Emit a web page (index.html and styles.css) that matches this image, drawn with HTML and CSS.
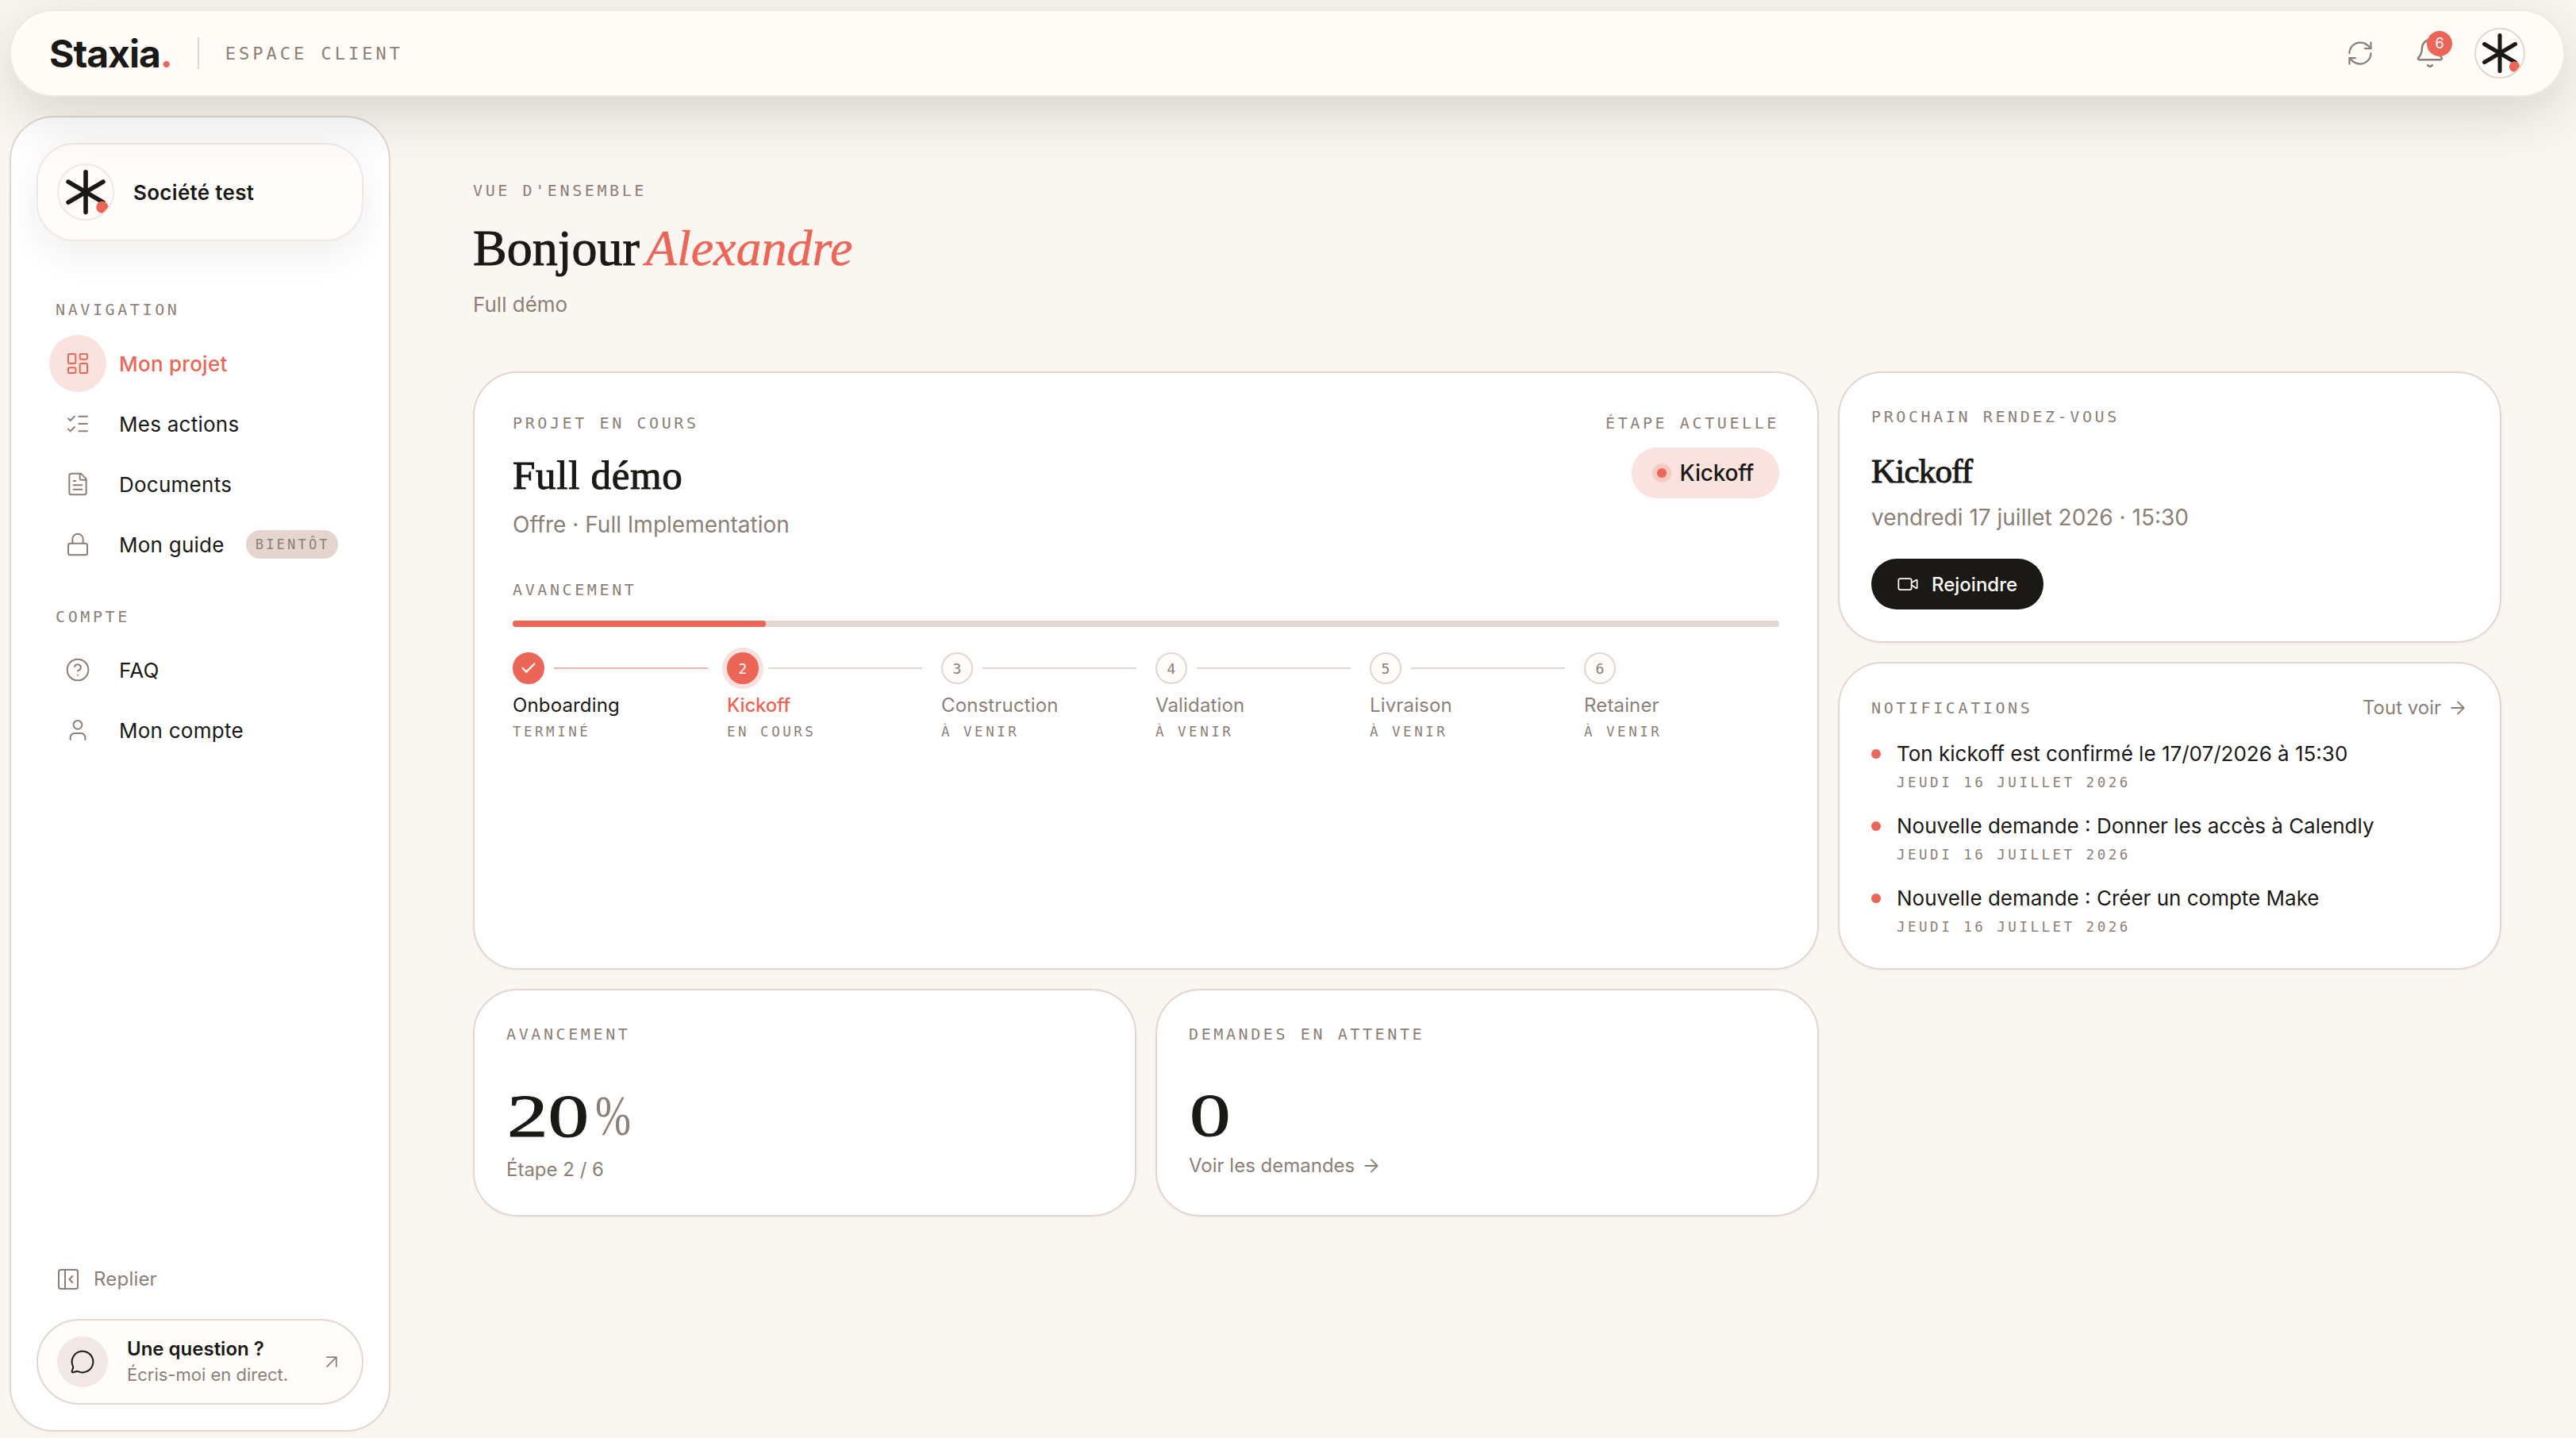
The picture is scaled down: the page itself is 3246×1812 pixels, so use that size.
FILE: index.html
```html
<!DOCTYPE html>
<html lang="fr">
<head>
    <meta charset="UTF-8">
    <title>Staxia - Espace client</title>
    <link rel="stylesheet" href="styles.css">
</head>
<body>
    <header class="topbar">
        <div class="logo">Staxia<span class="logo-dot">.</span></div>
        <div class="divider"></div>
        <div class="space-name">Espace client</div>
        <div class="topbar-actions">
            <svg class="icon icon-refresh" viewBox="0 0 24 24"><path d="M3 12a9 9 0 0 1 9-9 9.75 9.75 0 0 1 6.74 2.74L21 8"/><path d="M21 3v5h-5"/><path d="M21 12a9 9 0 0 1-9 9 9.75 9.75 0 0 1-6.74-2.74L3 16"/><path d="M8 16H3v5"/></svg>
            <div class="bell">
                <svg class="icon icon-bell" viewBox="0 0 24 24"><path d="M10.268 21a2 2 0 0 0 3.464 0"/><path d="M3.262 15.326A1 1 0 0 0 4 17h16a1 1 0 0 0 .74-1.673C19.41 13.956 18 12.499 18 8A6 6 0 0 0 6 8c0 4.499-1.411 5.956-2.738 7.326"/></svg>
                <span class="bell-count">6</span>
            </div>
            <div class="avatar">
                <svg viewBox="0 0 64 64"><g stroke="#1a1915" stroke-width="5" stroke-linecap="round"><path d="M32 9.500v45M12.500 20.500l39 23M51.500 20.500l-39 23"/></g><circle cx="50.500" cy="49" r="6.700" fill="#ec6657"/></svg>
            </div>
        </div>
    </header>

    <div class="layout">
        <aside class="sidebar">
            <div class="company">
                <div class="avatar avatar-company">
                    <svg viewBox="0 0 64 64"><g stroke="#1a1915" stroke-width="5" stroke-linecap="round"><path d="M32 9.500v45M12.500 20.500l39 23M51.500 20.500l-39 23"/></g><circle cx="50.500" cy="49" r="6.700" fill="#ec6657"/></svg>
                </div>
                <span class="company-name">Société test</span>
            </div>

            <div class="label nav-label">Navigation</div>
            <nav class="nav">
                <a class="nav-item active">
                    <span class="nav-icon"><svg class="icon" viewBox="0 0 24 24"><rect x="3" y="3" width="7" height="9" rx="1"/><rect x="14" y="3" width="7" height="5" rx="1"/><rect x="14" y="12" width="7" height="9" rx="1"/><rect x="3" y="16" width="7" height="5" rx="1"/></svg></span>
                    <span>Mon projet</span>
                </a>
                <a class="nav-item">
                    <span class="nav-icon"><svg class="icon" viewBox="0 0 24 24"><path d="M13 5h8M13 12h8M13 19h8M3 17l2 2 4-4M3 7l2 2 4-4"/></svg></span>
                    <span>Mes actions</span>
                </a>
                <a class="nav-item">
                    <span class="nav-icon"><svg class="icon" viewBox="0 0 24 24"><path d="M6 22a2 2 0 0 1-2-2V4a2 2 0 0 1 2-2h8a2.400 2.400 0 0 1 1.704.706l3.588 3.588A2.400 2.400 0 0 1 20 8v12a2 2 0 0 1-2 2z"/><path d="M14 2v5a1 1 0 0 0 1 1h5M10 9H8M16 13H8M16 17H8"/></svg></span>
                    <span>Documents</span>
                </a>
                <a class="nav-item">
                    <span class="nav-icon"><svg class="icon" viewBox="0 0 24 24"><rect x="3" y="11" width="18" height="11" rx="2"/><path d="M7 11V7a5 5 0 0 1 10 0v4"/></svg></span>
                    <span>Mon guide</span>
                    <span class="soon">Bientôt</span>
                </a>
            </nav>

            <div class="label nav-label nav-label-account">Compte</div>
            <nav class="nav">
                <a class="nav-item">
                    <span class="nav-icon"><svg class="icon" viewBox="0 0 24 24"><circle cx="12" cy="12" r="10"/><path d="M9.090 9a3 3 0 0 1 5.830 1c0 2-3 3-3 3M12 17h.01"/></svg></span>
                    <span>FAQ</span>
                </a>
                <a class="nav-item">
                    <span class="nav-icon"><svg class="icon" viewBox="0 0 24 24"><path d="M19 21v-2a4 4 0 0 0-4-4H9a4 4 0 0 0-4 4v2"/><circle cx="12" cy="7" r="4"/></svg></span>
                    <span>Mon compte</span>
                </a>
            </nav>

            <div class="collapse">
                <svg class="icon" viewBox="0 0 24 24"><rect x="3" y="3" width="18" height="18" rx="2"/><path d="M9 3v18M16 15l-3-3 3-3"/></svg>
                <span>Replier</span>
            </div>
            <a class="question">
                <span class="question-icon"><svg class="icon" viewBox="0 0 24 24"><path d="M2.992 16.342a2 2 0 0 1 .094 1.167l-1.065 3.290a1 1 0 0 0 1.236 1.168l3.413-.998a2 2 0 0 1 1.099.092 10 10 0 1 0-4.777-4.719"/></svg></span>
                <span class="question-text">
                    <span class="question-title">Une question ?</span>
                    <span class="question-sub">Écris-moi en direct.</span>
                </span>
                <svg class="icon icon-small" viewBox="0 0 24 24"><path d="M7 7h10v10M7 17 17 7"/></svg>
            </a>
        </aside>

        <main class="main">
            <div class="label">Vue d'ensemble</div>
            <h1>Bonjour <em>Alexandre</em></h1>
            <p class="subtitle">Full démo</p>

            <div class="grid">
                <section class="card card-project">
                    <div class="project-head">
                        <div>
                            <div class="label">Projet en cours</div>
                            <h2>Full démo</h2>
                            <p class="offer">Offre · Full Implementation</p>
                        </div>
                        <div class="current">
                            <div class="label">Étape actuelle</div>
                            <div class="pill"><span class="pill-dot"></span>Kickoff</div>
                        </div>
                    </div>
                    <div class="label progress-label">Avancement</div>
                    <div class="progress"><div class="progress-fill" style="width: 20%"></div></div>
                    <div class="steps">
                        <div class="step done">
                            <div class="step-top"><span class="step-num"><svg class="check" viewBox="0 0 24 24"><path d="M20 6 9 17l-5-5"/></svg></span><span class="step-line"></span></div>
                            <div class="step-name">Onboarding</div>
                            <div class="step-state">Terminé</div>
                        </div>
                        <div class="step now">
                            <div class="step-top"><span class="step-num">2</span><span class="step-line"></span></div>
                            <div class="step-name">Kickoff</div>
                            <div class="step-state">En cours</div>
                        </div>
                        <div class="step">
                            <div class="step-top"><span class="step-num">3</span><span class="step-line"></span></div>
                            <div class="step-name">Construction</div>
                            <div class="step-state">À venir</div>
                        </div>
                        <div class="step">
                            <div class="step-top"><span class="step-num">4</span><span class="step-line"></span></div>
                            <div class="step-name">Validation</div>
                            <div class="step-state">À venir</div>
                        </div>
                        <div class="step">
                            <div class="step-top"><span class="step-num">5</span><span class="step-line"></span></div>
                            <div class="step-name">Livraison</div>
                            <div class="step-state">À venir</div>
                        </div>
                        <div class="step">
                            <div class="step-top"><span class="step-num">6</span></div>
                            <div class="step-name">Retainer</div>
                            <div class="step-state">À venir</div>
                        </div>
                    </div>
                </section>

                <section class="card">
                    <div class="label">Prochain rendez-vous</div>
                    <h3>Kickoff</h3>
                    <p class="meeting-date">vendredi 17 juillet 2026 · 15:30</p>
                    <a class="join">
                        <svg class="icon icon-small" viewBox="0 0 24 24"><path d="m16 13 5.223 3.482a.5.5 0 0 0 .777-.416V7.870a.5.5 0 0 0-.752-.432L16 10.500"/><rect x="2" y="6" width="14" height="12" rx="2"/></svg>
                        <span>Rejoindre</span>
                    </a>
                </section>

                <section class="card">
                    <div class="notif-head">
                        <div class="label">Notifications</div>
                        <a class="link">Tout voir <svg class="icon" viewBox="0 0 24 24"><path d="M5 12h14M12 5l7 7-7 7"/></svg></a>
                    </div>
                    <ul class="notifs">
                        <li>
                            <div class="notif-text">Ton kickoff est confirmé le 17/07/2026 à 15:30</div>
                            <div class="step-state">Jeudi 16 juillet 2026</div>
                        </li>
                        <li>
                            <div class="notif-text">Nouvelle demande : Donner les accès à Calendly</div>
                            <div class="step-state">Jeudi 16 juillet 2026</div>
                        </li>
                        <li>
                            <div class="notif-text">Nouvelle demande : Créer un compte Make</div>
                            <div class="step-state">Jeudi 16 juillet 2026</div>
                        </li>
                    </ul>
                </section>

                <section class="card">
                    <div class="label">Avancement</div>
                    <div class="stat"><span class="stat-num">20</span><span class="stat-unit">%</span></div>
                    <div class="stat-sub">Étape 2 / 6</div>
                </section>

                <section class="card">
                    <div class="label">Demandes en attente</div>
                    <div class="stat stat-requests"><span class="stat-num">0</span></div>
                    <a class="link">Voir les demandes <svg class="icon" viewBox="0 0 24 24"><path d="M5 12h14M12 5l7 7-7 7"/></svg></a>
                </section>
            </div>
        </main>
    </div>
</body>
</html>
```
FILE: styles.css
```css
* {
    box-sizing: border-box;
}
body {
    margin: 0;
    padding: 12px 14px 8px 12px;
    height: 1812px;
    display: flex;
    flex-direction: column;
    gap: 24px;
    overflow: hidden;
    background-color: #faf6f1;
    color: #1a1915;
    font-family: Inter, sans-serif;
    font-size: 26px;
}
h1, h2, h3, p, ul {
    margin: 0;
    padding: 0;
}
h1, h2, h3 {
    font-family: "Liberation Serif", serif;
    font-weight: 400;
    -webkit-text-stroke: 1px currentColor;
}

/* Icons */
.icon {
    display: block;
    flex: none;
    width: 32px;
    height: 32px;
    fill: none;
    stroke: currentColor;
    stroke-width: 1.5;
    stroke-linecap: round;
    stroke-linejoin: round;
}
.icon-small {
    width: 28px;
    height: 28px;
}
.label {
    font-family: "DejaVu Sans Mono", monospace;
    font-size: 20px;
    line-height: 30px;
    letter-spacing: 3.6px;
    text-transform: uppercase;
    color: #8c7f76;
}

/* Top bar */
.topbar {
    position: relative;
    z-index: 2;
    flex: none;
    height: 110px;
    padding: 0 48px;
    display: flex;
    align-items: center;
    background-color: #fffbf7;
    border: 2px solid #f1e8e4;
    border-radius: 55px;
    box-shadow: 0 20px 72px rgba(26, 25, 21, 0.16);
}
.logo {
    font-size: 48px;
    font-weight: 700;
    letter-spacing: -1px;
}
.logo-dot {
    color: #ec6657;
}
.divider {
    width: 2px;
    height: 40px;
    margin: 0 33px 0 32px;
    background-color: #e4d6cf;
}
.space-name {
    font-family: "DejaVu Sans Mono", monospace;
    font-size: 22px;
    letter-spacing: 4px;
    text-transform: uppercase;
    color: #8c7f76;
}
.topbar-actions {
    margin-left: auto;
    display: flex;
    align-items: center;
    color: #8c7f76;
}
.icon-refresh {
    width: 36px;
    height: 36px;
    margin-right: 50px;
}
.bell {
    position: relative;
    margin-right: 36px;
}
.icon-bell {
    width: 40px;
    height: 40px;
}
.bell-count {
    position: absolute;
    top: -8px;
    left: 16px;
    width: 32px;
    height: 32px;
    border-radius: 50%;
    background-color: #ec6657;
    color: #fff;
    font-size: 18px;
    line-height: 32px;
    text-align: center;
}
.avatar {
    flex: none;
    width: 64px;
    height: 64px;
    border: 2px solid #e4d6cf;
    border-radius: 50%;
    background-color: #fffdfb;
    overflow: hidden;
}
.avatar svg {
    display: block;
    width: 64px;
    height: 64px;
    margin: -2px;
}

/* Sidebar */
.layout {
    flex: 1;
    display: flex;
    min-height: 0;
}
.sidebar {
    flex: none;
    width: 480px;
    padding: 32px;
    display: flex;
    flex-direction: column;
    background-color: #fff;
    border: 2px solid #e4d6cf;
    border-radius: 56px;
    box-shadow: 0 2px 4px rgba(26, 25, 21, 0.03);
}
.company {
    height: 124px;
    padding: 0 24px;
    display: flex;
    align-items: center;
    gap: 24px;
    border: 2px solid #f1e8e4;
    border-radius: 48px;
    background-color: #fffdfb;
    box-shadow: 0 16px 48px rgba(26, 25, 21, 0.07);
}
.avatar-company {
    width: 72px;
    height: 72px;
    border-color: #f1e8e4;
}
.avatar-company svg {
    width: 72px;
    height: 72px;
}
.company-name {
    font-weight: 600;
    letter-spacing: 0.3px;
}
.nav-label {
    margin: 71px 0 15px 24px;
}
.nav-label-account {
    margin: 38px 0 14px 24px;
}
.nav-item {
    height: 76px;
    padding-left: 16px;
    display: flex;
    align-items: center;
    gap: 16px;
    letter-spacing: 0.25px;
}
.nav-icon {
    width: 72px;
    height: 72px;
    display: flex;
    align-items: center;
    justify-content: center;
    border-radius: 50%;
    color: #8c7f76;
}
.active {
    color: #ec6657;
    font-weight: 500;
}
.active .nav-icon {
    background-color: #fae2de;
    color: #ec6657;
}
.soon {
    margin-left: 11px;
    padding: 0 10px 0 12px;
    border-radius: 18px;
    background-color: #e4d6cf;
    color: #8c7f76;
    font-family: "DejaVu Sans Mono", monospace;
    font-size: 17px;
    line-height: 36px;
    letter-spacing: 3.2px;
    text-transform: uppercase;
}
.collapse {
    margin: auto 0 34px 24px;
    display: flex;
    align-items: center;
    gap: 16px;
    color: #8c7f76;
    font-size: 24px;
    line-height: 32px;
    letter-spacing: 0.2px;
}
.question {
    height: 108px;
    padding: 0 24px;
    display: flex;
    align-items: center;
    border: 2px solid #e4d6cf;
    border-radius: 54px;
    background-color: #fffcf9;
    color: #8c7f76;
}
.question-icon {
    width: 64px;
    height: 64px;
    display: flex;
    align-items: center;
    justify-content: center;
    border-radius: 50%;
    background-color: #f2e9e6;
    color: #1a1915;
}
.question-text {
    flex: 1;
    margin-left: 24px;
    display: flex;
    flex-direction: column;
    line-height: 33px;
}
.question-title {
    color: #1a1915;
    font-size: 24px;
    font-weight: 600;
}
.question-sub {
    font-size: 22px;
}

/* Main */
.main {
    flex: 1;
    padding: 79px 80px 0 104px;
}
h1 {
    margin-top: 22px;
    font-size: 64px;
    line-height: 72px;
}
h1 em {
    margin-left: -8px;
    color: #ec6657;
    -webkit-text-stroke: 0.5px currentColor;
}
.subtitle {
    margin: 15px 0 64px;
    color: #8c7f76;
    line-height: 40px;
}
.grid {
    display: grid;
    grid-template-columns: repeat(3, 836px);
    gap: 24px;
}
.card {
    padding: 40px;
    background-color: #fff;
    border: 2px solid #e4d6cf;
    border-radius: 56px;
    box-shadow: 0 2px 4px rgba(26, 25, 21, 0.03);
}
.card-project {
    grid-column: span 2;
    grid-row: span 2;
    padding: 48px;
}
.project-head {
    display: flex;
    justify-content: space-between;
}
h2 {
    margin-top: 21px;
    font-size: 51px;
    line-height: 60px;
    letter-spacing: 0.7px;
}
.offer {
    margin-top: 12px;
    font-size: 28px;
    line-height: 40px;
    color: #8c7f76;
}
.current {
    display: flex;
    flex-direction: column;
    align-items: flex-end;
}
.pill {
    height: 64px;
    margin-top: 16px;
    padding: 0 32px;
    display: flex;
    align-items: center;
    border-radius: 32px;
    background-color: #fae2de;
    font-size: 28px;
    font-weight: 500;
    letter-spacing: -0.2px;
}
.pill-dot {
    width: 12px;
    height: 12px;
    margin-right: 17px;
    border-radius: 50%;
    background-color: #ec6657;
    box-shadow: 0 0 0 6px #f8cac4;
}
.progress-label {
    margin-top: 47px;
}
.progress {
    height: 8px;
    margin-top: 24px;
    border-radius: 4px;
    background-color: #e4d6cf;
}
.progress-fill {
    height: 8px;
    border-radius: 4px;
    background-color: #ec6657;
}
.steps {
    margin-top: 32px;
    display: grid;
    grid-template-columns: repeat(6, 1fr);
    gap: 24px;
    color: #8c7f76;
}
.step-top {
    display: flex;
    align-items: center;
    gap: 12px;
}
.step-num {
    width: 40px;
    height: 40px;
    display: flex;
    align-items: center;
    justify-content: center;
    border: 2px solid #e4d6cf;
    border-radius: 50%;
    background-color: #fffcf9;
    font-family: "DejaVu Sans Mono", monospace;
    font-size: 18px;
}
.step-line {
    flex: 1;
    height: 2px;
    background-color: #e4d6cf;
}
.done .step-num, .now .step-num {
    border-color: #ec6657;
    background-color: #ec6657;
    color: #fff;
}
.done .step-line {
    background-color: #f6b3ab;
}
.now .step-num {
    box-shadow: 0 0 0 6px #fbe1de;
}
.check {
    width: 22px;
    height: 22px;
    fill: none;
    stroke: #fff;
    stroke-width: 2.5;
    stroke-linecap: round;
    stroke-linejoin: round;
}
.step-name {
    margin: 11px 0 5px;
    font-size: 24px;
    line-height: 32px;
    letter-spacing: 0.15px;
}
.done .step-name {
    color: #1a1915;
}
.now .step-name {
    color: #ec6657;
    font-weight: 500;
    letter-spacing: -0.2px;
}
.step-state {
    font-family: "DejaVu Sans Mono", monospace;
    font-size: 17.5px;
    line-height: 24px;
    letter-spacing: 3.5px;
    text-transform: uppercase;
    color: #8c7f76;
}
h3 {
    margin-top: 29px;
    font-size: 43px;
    line-height: 50px;
    letter-spacing: -0.8px;
}
.meeting-date {
    margin: 13px 0 32px;
    font-size: 28px;
    line-height: 40px;
    color: #8c7f76;
}
.join {
    width: 217px;
    height: 64px;
    padding-left: 32px;
    display: flex;
    align-items: center;
    gap: 16px;
    border-radius: 32px;
    background-color: #1a1915;
    color: #fffcf9;
    font-size: 24px;
    font-weight: 500;
}
.notif-head {
    display: flex;
    align-items: center;
    justify-content: space-between;
}
.link {
    display: flex;
    align-items: center;
    gap: 8px;
    color: #8c7f76;
    font-size: 24px;
    line-height: 32px;
}
.link .icon {
    width: 26px;
    height: 26px;
    stroke-width: 1.8;
}
.notifs {
    margin-top: 24px;
    display: flex;
    flex-direction: column;
    gap: 25px;
    list-style: none;
}
.notifs li {
    display: grid;
    grid-template-columns: 12px 1fr;
    column-gap: 20px;
    row-gap: 6px;
    align-items: center;
}
.notifs li::before {
    content: "";
    width: 12px;
    height: 12px;
    border-radius: 50%;
    background-color: #ec6657;
}
.notifs .step-state {
    grid-column: 2;
}
.notif-text {
    line-height: 36px;
}
.stat {
    height: 90px;
    margin: 43px 0 6px;
    padding-left: 1px;
    display: flex;
    align-items: center;
    font-family: "Liberation Serif", serif;
    line-height: 90px;
}
.stat-requests {
    margin: 42px 0 3px;
}
.stat-num {
    font-size: 77px;
    transform: scaleX(1.34);
    transform-origin: left;
    -webkit-text-stroke: 1px currentColor;
}
.stat-unit {
    margin-left: 34px;
    font-size: 72px;
    color: #8c7f76;
    transform: scaleX(0.75);
    transform-origin: left;
}
.stat-sub {
    font-size: 24px;
    line-height: 34px;
    color: #8c7f76;
}
```
